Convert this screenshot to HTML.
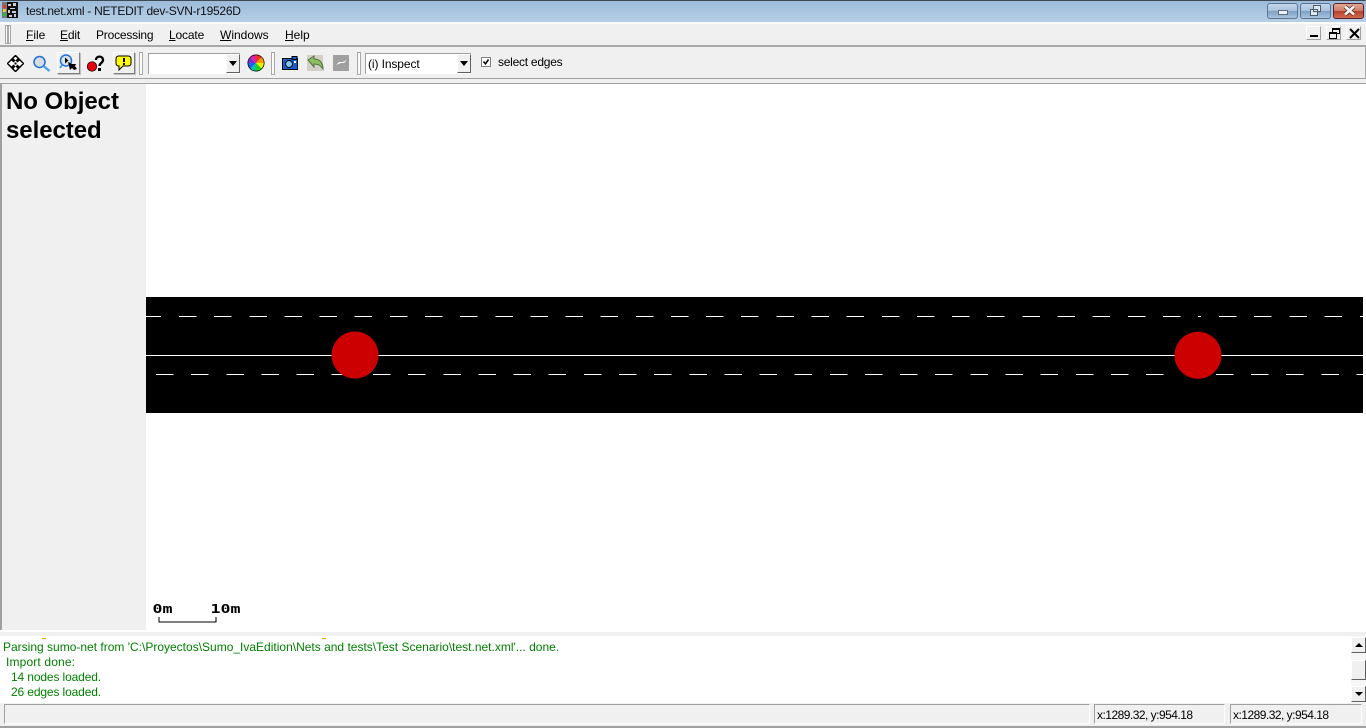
<!DOCTYPE html>
<html><head><meta charset="utf-8"><title>test.net.xml - NETEDIT dev-SVN-r19526D</title>
<style>
html,body{margin:0;padding:0;width:1366px;height:728px;overflow:hidden;background:#f0f0f0}
body{position:relative;font-family:"Liberation Sans",sans-serif;font-size:12px;color:#000}
.a{position:absolute;white-space:nowrap;line-height:14px}
.b{position:absolute;box-sizing:border-box}
u{text-decoration:underline}
.up{background:#f0f0f0;border:1px solid;border-color:#fff #808080 #808080 #fff;box-shadow:1px 1px 0 #c0c0c0}
.grip{position:absolute;width:4px;box-sizing:border-box;border:1px solid #a8a8a8;background:#fbfbfb}
.combo{position:absolute;background:#fff;box-sizing:border-box;border-top:1px solid #a0a0a0;border-left:1px solid #a0a0a0}
.arrow{position:absolute;background:#f0f0f0;border:1px solid;border-color:#fff #606060 #606060 #fff;box-sizing:border-box}
.arrow i{position:absolute;left:2px;top:6px;width:0;height:0;border-left:4.500px solid transparent;border-right:4.500px solid transparent;border-top:5px solid #000}
.wb{position:absolute;top:3px;height:16px;box-sizing:border-box;border:1px solid #5a7596;border-radius:3px;background:linear-gradient(#c3d6ea 0,#a9c3dd 48%,#7d9fc2 50%,#a8c4de 100%)}
.mdi{position:absolute;top:26px;width:15px;height:14px;background:#f0f0f0;box-sizing:border-box;border:1px solid;border-color:#fff #a0a0a0 #a0a0a0 #fff}
.sunk{position:absolute;top:704px;height:20px;box-sizing:border-box;border:1px solid;border-color:#a0a0a0 #fff #fff #a0a0a0;background:#f0f0f0}
.sb{position:absolute;left:1351px;width:15px;background:#f0f0f0;box-sizing:border-box;border:1px solid;border-color:#fff #606060 #606060 #fff}
</style></head><body>
<!-- title bar -->
<div class="b" style="left:0;top:0;width:1366px;height:22px;background:linear-gradient(#9dbcd9 0,#a9c5e0 50%,#b7cfe6 100%);border-top:1px solid #3f4a55"></div>
<svg class="b" style="left:2px;top:2px" width="16" height="16" viewBox="0 0 16 16" shape-rendering="crispEdges">
<rect x="0" y="0" width="16" height="16" fill="#111"/><rect x="0" y="0" width="5" height="16" fill="#777"/>
<rect x="1" y="3" width="3" height="3" fill="#e33"/><rect x="1" y="7" width="3" height="3" fill="#dc3"/><rect x="1" y="11" width="3" height="3" fill="#3b3"/>
<path d="M6 2h3v2h-3zM11 1h3v3h-3zM8 6h5v1h-5zM6 8h2v3h-2zM10 9h4v2h-4zM7 13h3v2h-3zM12 12h2v3h-2z" fill="#ccc"/></svg>
<div class="a" style="left:26px;top:4px;color:#111;letter-spacing:-.26px">test.net.xml - NETEDIT dev-SVN-r19526D</div>
<div class="wb" style="left:1267px;width:31px"><div class="b" style="left:10px;top:6px;width:10px;height:5px;background:#eef3f8;border:1px solid #5a6c80"></div></div>
<div class="wb" style="left:1300px;width:31px"><svg class="b" style="left:8px;top:0" width="13" height="13" shape-rendering="crispEdges"><path d="M4.500 1.500h7v6h-7zM1.500 5.500h7v6h-7z" fill="#dfe8f1" stroke="#4c5c6e"/></svg></div>
<div class="wb" style="left:1333px;width:31px;border-color:#5a2030;background:linear-gradient(#e2a899 0,#d07c66 48%,#b8402a 50%,#d26a50 100%)"><svg class="b" style="left:9px;top:1px" width="13" height="11"><path d="M2 1.500l9 8M11 1.500l-9 8" stroke="#4b2d2d" stroke-width="4"/><path d="M2 1.500l9 8M11 1.500l-9 8" stroke="#f2f2f2" stroke-width="2.600"/></svg></div>

<!-- menu bar -->
<div class="b" style="left:0;top:22px;width:1366px;height:25px;background:#f0f0f0;border-top:2px solid #fbfbfb;border-bottom:2px solid #a8a8a8"></div>
<div class="grip" style="left:5px;top:25px;height:19px;width:3px"></div>
<div class="grip" style="left:8px;top:25px;height:19px;width:3px"></div>
<div class="a" style="left:26px;top:28px"><u>F</u>ile</div>
<div class="a" style="left:60px;top:28px;letter-spacing:-.15px"><u>E</u>dit</div>
<div class="a" style="left:96px;top:28px;letter-spacing:-.2px">Processing</div>
<div class="a" style="left:169px;top:28px;letter-spacing:-.15px"><u>L</u>ocate</div>
<div class="a" style="left:220px;top:28px"><u>W</u>indows</div>
<div class="a" style="left:285px;top:28px"><u>H</u>elp</div>
<div class="mdi" style="left:1306px"><div class="b" style="left:3px;top:8px;width:8px;height:2px;background:#000"></div></div>
<div class="mdi" style="left:1326px"><svg class="b" style="left:2px;top:1px" width="11" height="11" shape-rendering="crispEdges"><path d="M3.500 .5h7v5h-7z" fill="none" stroke="#000"/><path d="M3 1h8" stroke="#000" stroke-width="2"/><rect x=".5" y="4.500" width="7" height="6" fill="#f0f0f0" stroke="#000"/><path d="M0 5h8" stroke="#000" stroke-width="2"/></svg></div>
<div class="mdi" style="left:1346px"><svg class="b" style="left:2px;top:1px" width="11" height="11"><path d="M1 1l9 9M10 1l-9 9" stroke="#000" stroke-width="2"/></svg></div>

<!-- toolbar -->
<div class="b" style="left:0;top:47px;width:1366px;height:32px;background:#f0f0f0;border-right:1px solid #a8a8a8;border-bottom:1px solid #a0a0a0"></div>
<div class="b" style="left:0;top:79px;width:1366px;height:5px;background:#f0f0f0;border-bottom:1px solid #a0a0a0"></div>

<svg class="b" style="left:7px;top:55px" width="17" height="17" viewBox="0 0 17 17" shape-rendering="crispEdges"><path d="M8.500 .5l3 3-2 2 1 1 2-2 4 4-4 4-2-2-1 1 2 2-3 3-3-3 2-2-1-1-2 2-4-4 4-4 2 2 1-1-2-2z" fill="#fff" stroke="#000" stroke-width="1.500" shape-rendering="auto"/><rect x="7.500" y="7.500" width="2" height="2" fill="#000"/></svg>
<svg class="b" style="left:32px;top:55px" width="19" height="17" viewBox="0 0 19 17"><circle cx="7.500" cy="7" r="5.500" fill="#d8dde4" stroke="#1e6fd8" stroke-width="1.500"/><path d="M11.500 11l6 5" stroke="#4aa0f0" stroke-width="2.400"/></svg>
<div class="b up" style="left:57px;top:52px;width:23px;height:22px"></div>
<svg class="b" style="left:59px;top:53px" width="20" height="20" viewBox="0 0 20 20"><circle cx="7" cy="7.500" r="5.500" fill="#dde3ea" stroke="#1e6fd8" stroke-width="1.500"/><path d="M3 12l-2 3" stroke="#4aa0f0" stroke-width="2"/><path d="M6 4.500l3.500 3-3.500 3z" fill="#000"/><path d="M9 9l4 2 4 0 -1 2 2 3-3 1-2-2-2 2z" fill="#000"/></svg>
<svg class="b" style="left:87px;top:55px" width="18" height="18" viewBox="0 0 18 18"><path d="M9 5c0-4.500 7-4.500 7 0 0 3-3.500 3-3.500 6" fill="none" stroke="#000" stroke-width="2.300"/><rect x="11" y="13" width="3" height="3" fill="#000"/><circle cx="5" cy="11.500" r="4.800" fill="#e00010" stroke="#000" stroke-width=".6"/></svg>
<div class="b up" style="left:113px;top:52px;width:22px;height:22px"></div>
<svg class="b" style="left:115px;top:55px" width="17" height="16" viewBox="0 0 17 16"><path d="M4 1h9q3 0 3 3v4q0 3-3 3H8l-4 4 0-4q-3 0-3-3V4q0-3 3-3z" fill="#ff0" stroke="#000" stroke-width="1"/><rect x="8" y="3" width="2" height="4" fill="#000"/><rect x="8" y="8" width="2" height="2" fill="#000"/></svg>
<div class="grip" style="left:139px;top:52px;height:23px"></div>
<div class="combo" style="left:148px;top:53px;width:92px;height:21px"></div>
<div class="arrow" style="left:226px;top:54px;width:14px;height:19px"><i></i></div>
<svg class="b" style="left:247px;top:54px" width="18" height="18" viewBox="0 0 18 18"><circle cx="9" cy="9" r="8" fill="#eee" stroke="#000"/><path d="M9 9V1.200a8 8 0 0 1 5.500 2.200z" fill="#f03020"/><path d="M9 9l5.500-5.600a8 8 0 0 1 2.300 5.600z" fill="#f8a000"/><path d="M9 9h7.800a8 8 0 0 1-2.300 5.500z" fill="#f0f000"/><path d="M9 9l5.500 5.500a8 8 0 0 1-5.500 2.300z" fill="#20d020"/><path d="M9 9v7.800a8 8 0 0 1-5.500-2.300z" fill="#00c8a0"/><path d="M9 9l-5.500 5.500a8 8 0 0 1-2.300-5.500z" fill="#2060f0"/><path d="M9 9H1.200a8 8 0 0 1 2.300-5.600z" fill="#8030d0"/><path d="M9 9L3.500 3.400A8 8 0 0 1 9 1.200z" fill="#e020a0"/></svg>
<div class="grip" style="left:271px;top:52px;height:23px"></div>
<svg class="b" style="left:282px;top:56px" width="16" height="14" viewBox="0 0 16 14" shape-rendering="crispEdges"><rect x=".5" y="2.500" width="15" height="11" fill="#1060d0" stroke="#000"/><rect x="10" y=".5" width="5" height="3" fill="#1060d0" stroke="#000"/><circle cx="7" cy="8" r="3.500" fill="#80c8f8" stroke="#000" shape-rendering="auto"/><rect x="12" y="5" width="2" height="2" fill="#fff"/></svg>
<div class="b" style="left:307px;top:55px;width:16px;height:16px;background:#d4d0c8"></div>
<svg class="b" style="left:307px;top:55px" width="17" height="16" viewBox="0 0 17 16"><path d="M1 5l6-4v3c5 0 9 3 9 10-2-3-4-5-9-5v3z" fill="#8cc060" stroke="#507040" stroke-width="1"/></svg>
<div class="b" style="left:333px;top:55px;width:16px;height:16px;background:#a0a0a0"></div>
<svg class="b" style="left:333px;top:55px" width="16" height="16" viewBox="0 0 16 16"><path d="M3 10l3-3h4l4-2-3 3H8z" fill="#fff"/></svg>
<div class="grip" style="left:357px;top:52px;height:23px"></div>
<div class="combo" style="left:365px;top:53px;width:106px;height:21px"></div>
<div class="a" style="left:368px;top:57px;letter-spacing:-.1px">(i) Inspect</div>
<div class="arrow" style="left:457px;top:54px;width:14px;height:19px"><i></i></div>
<div class="b" style="left:481px;top:57px;width:10px;height:10px;background:#fff;border:1px solid #808080"></div>
<svg class="b" style="left:481px;top:57px" width="10" height="10"><path d="M2.500 4.500l2 2.300 3-4.300" fill="none" stroke="#000" stroke-width="1.600"/></svg>
<div class="a" style="left:498px;top:55px;letter-spacing:-.25px">select edges</div>

<!-- left panel -->
<div class="b" style="left:0;top:84px;width:146px;height:546px;background:#f0f0f0;border-left:2px solid #a0a0a0"></div>
<div class="a" style="left:6px;top:87px;font-size:24px;font-weight:bold;line-height:29px;white-space:normal;width:135px;letter-spacing:-.05px">No Object selected</div>

<!-- canvas -->
<div class="b" style="left:0;top:630px;width:1366px;height:2px;background:#fff"></div>
<div class="b" style="left:146px;top:84px;width:1220px;height:546px;background:#fff"></div>
<svg class="b" style="left:146px;top:84px" width="1220" height="546" viewBox="146 84 1220 546">
<rect x="146" y="297" width="1217" height="116" fill="#000"/>
<g shape-rendering="crispEdges" stroke="#fff" stroke-width="1" fill="none">
<path d="M146 355.500H1363"/>
<path d="M146 316.500h15"/>
<path d="M179 316.500H1181" stroke-dasharray="17.500 17.640"/>
<path d="M1198 316.500h3"/>
<path d="M1219 316.500H1363" stroke-dasharray="17.500 17.700"/>
<path d="M156 374.500H347" stroke-dasharray="17.500 17.640"/>
<path d="M373 374.500H1165" stroke-dasharray="17.500 17.640"/>
<path d="M1216 374.500H1363" stroke-dasharray="17.500 17.600"/>
</g>
<circle cx="355" cy="355" r="23.500" fill="#cc0000"/>
<circle cx="1198" cy="355.300" r="23.500" fill="#cc0000"/>
<path d="M159 617v5h57v-5" fill="none" stroke="#000" stroke-width="1"/>
<text transform="translate(152.500 613) scale(1.33 1)" font-family="DejaVu Sans Mono,monospace" font-weight="bold" font-size="12.500" fill="#000">0m</text>
<text transform="translate(210.500 613) scale(1.33 1)" font-family="DejaVu Sans Mono,monospace" font-weight="bold" font-size="12.500" fill="#000">10m</text>
</svg>

<!-- messages -->
<div class="b" style="left:0;top:632px;width:1366px;height:4px;background:#f0f0f0"></div>
<div class="b" style="left:0;top:636px;width:1351px;height:67px;background:#fff"></div>
<div class="b" style="left:42px;top:638px;width:4px;height:1px;background:#f0a000"></div>
<div class="b" style="left:322px;top:638px;width:4px;height:1px;background:#f0a000"></div>
<div class="a" style="left:3px;top:640px;color:#008000">Parsing sumo-net from 'C:\Proyectos\Sumo_IvaEdition\Nets and tests\Test Scenario\test.net.xml'... done.</div>
<div class="a" style="left:6px;top:655px;color:#008000;letter-spacing:.15px">Import done:</div>
<div class="a" style="left:11px;top:670px;color:#008000;letter-spacing:-.13px">14 nodes loaded.</div>
<div class="a" style="left:11px;top:685px;color:#008000;letter-spacing:-.13px">26 edges loaded.</div>
<div class="b" style="left:1351px;top:636px;width:15px;height:67px;background:#f6f6f6"></div>
<div class="sb" style="top:637px;height:16px"><div class="b" style="left:3px;top:5px;width:0;height:0;border-left:4px solid transparent;border-right:4px solid transparent;border-bottom:4px solid #000"></div></div>
<div class="sb" style="top:660px;height:20px"></div>
<div class="sb" style="top:686px;height:16px"><div class="b" style="left:3px;top:5px;width:0;height:0;border-left:4px solid transparent;border-right:4px solid transparent;border-top:4px solid #000"></div></div>

<!-- status -->
<div class="b" style="left:0;top:703px;width:1366px;height:25px;background:#f0f0f0;border-bottom:2px solid #a0a0a0"></div>
<div class="sunk" style="left:4px;width:1086px"></div>
<div class="sunk" style="left:1094px;width:131px"></div>
<div class="sunk" style="left:1230px;width:132px"></div>
<div class="a" style="left:1097px;top:708px;letter-spacing:-.52px">x:1289.32, y:954.18</div>
<div class="a" style="left:1233px;top:708px;letter-spacing:-.52px">x:1289.32, y:954.18</div>
</body></html>
